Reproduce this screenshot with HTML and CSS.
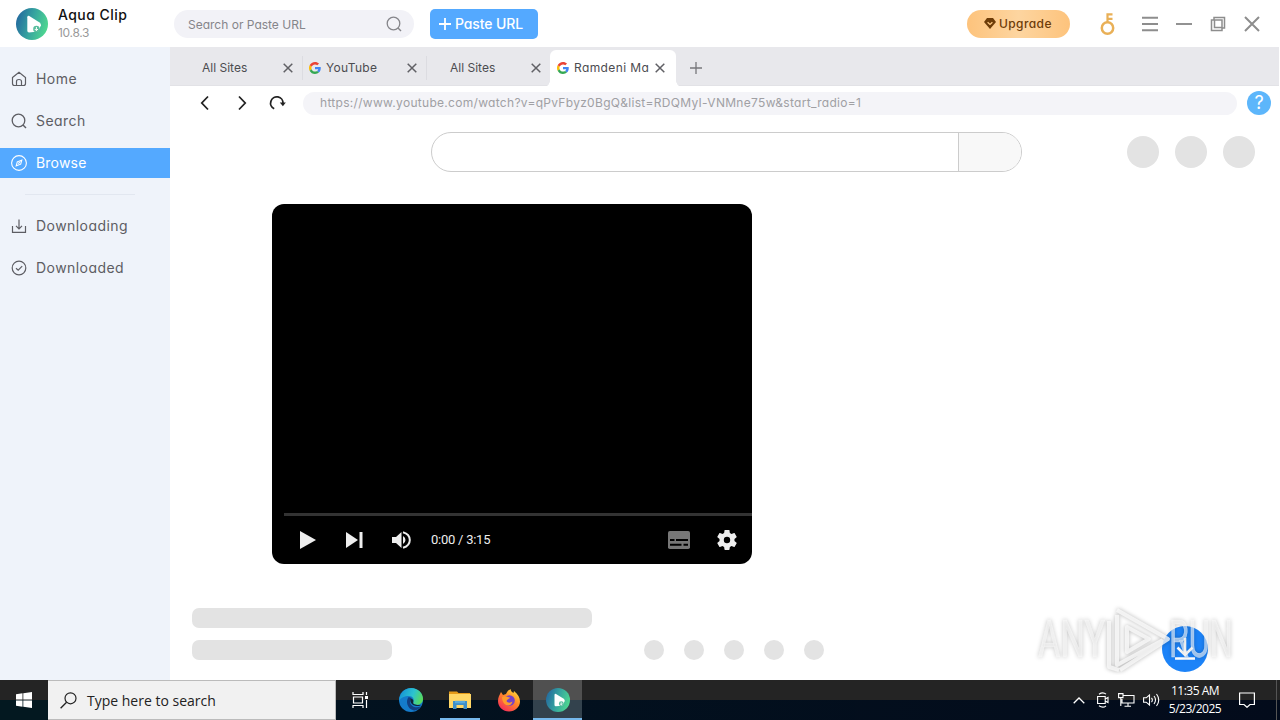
FILE: index.html
```
<!DOCTYPE html>
<html lang="en">
<head>
    <meta charset="UTF-8">
    <meta name="viewport" content="width=device-width, initial-scale=1.0">
    <title>Aqua Clip</title>
    <link rel="stylesheet" href="styles.css">
</head>
<body>
<!-- shared shapes -->
<svg class="defs" width="0" height="0">
    <defs>
        <linearGradient id="aqua" x1="0" y1="0.3" x2="1" y2="0.6">
            <stop offset="0" stop-color="#24699f"/>
            <stop offset="0.5" stop-color="#36a59f"/>
            <stop offset="1" stop-color="#4fd98f"/>
        </linearGradient>
        <linearGradient id="edgeTop" x1="0" y1="0.3" x2="1" y2="0.6">
            <stop offset="0" stop-color="#1593d6"/>
            <stop offset="0.55" stop-color="#2cc3cf"/>
            <stop offset="1" stop-color="#5bdc55"/>
        </linearGradient>
        <linearGradient id="fox" x1="0.9" y1="0" x2="0.2" y2="1">
            <stop offset="0" stop-color="#ffe840"/>
            <stop offset="0.45" stop-color="#ff8a28"/>
            <stop offset="1" stop-color="#f5265c"/>
        </linearGradient>
    </defs>
    <symbol id="logo" viewBox="0 0 32 32">
        <circle cx="16" cy="16" r="16" fill="url(#aqua)"/>
        <path d="M11.300 9.200q.2-2 2-1.200l10.300 6.400q1.400 1 1.400 2.800l-3 6.300-9 .9q-1.600 0-1.700-1.600z" fill="#fff"/>
        <circle cx="20.400" cy="21" r="3.200" fill="#58bd9d"/>
        <path d="M20.400 19v3.600M18.800 21l1.600 1.600L22 21" fill="none" stroke="#fff"/>
    </symbol>
    <symbol id="google" viewBox="0 0 48 48">
        <path fill="#ea4335" d="M24 9.500c3.540 0 6.710 1.220 9.210 3.600l6.850-6.850C35.900 2.380 30.470 0 24 0 14.620 0 6.510 5.380 2.560 13.220l7.980 6.190C12.430 13.720 17.740 9.500 24 9.500z"/>
        <path fill="#4285f4" d="M46.980 24.550c0-1.570-.15-3.090-.38-4.550H24v9.020h12.940c-.58 2.960-2.260 5.480-4.780 7.180l7.730 6c4.510-4.180 7.090-10.360 7.090-17.650z"/>
        <path fill="#fbbc05" d="M10.530 28.590c-.48-1.450-.76-2.990-.76-4.590s.27-3.140.76-4.590l-7.980-6.190C.92 16.460 0 20.120 0 24c0 3.880.92 7.540 2.560 10.780l7.970-6.190z"/>
        <path fill="#34a853" d="M24 48c6.480 0 11.930-2.130 15.890-5.810l-7.730-6c-2.150 1.450-4.920 2.300-8.160 2.300-6.260 0-11.570-4.220-13.470-9.910l-7.980 6.190C6.510 42.620 14.620 48 24 48z"/>
    </symbol>
    <symbol id="close" viewBox="0 0 10 10">
        <path d="M.7.7l8.600 8.600M9.300.7L.7 9.300" fill="none" stroke="#606065" stroke-width="1.500"/>
    </symbol>
    <symbol id="search" viewBox="0 0 16 16">
        <circle cx="7.500" cy="7.500" r="6.300" fill="none" stroke="currentColor" stroke-width="1.300"/>
        <path d="M12 12l3 3" stroke="currentColor" stroke-width="1.400"/>
    </symbol>
</svg>

<!-- TITLE BAR -->
<header class="titlebar">
    <svg class="brand-logo" width="32" height="32"><use href="#logo"/></svg>
    <div class="brand">
        <div class="brand-name">Aqua Clip</div>
        <div class="brand-version">10.8.3</div>
    </div>
    <div class="search-box">
        <span>Search or Paste URL</span>
        <svg width="16" height="16"><use href="#search"/></svg>
    </div>
    <div class="paste">
        <svg width="12" height="12" viewBox="0 0 12 12"><path d="M6 0v12M0 6h12" stroke="#fff" stroke-width="1.800"/></svg>
        <span>Paste URL</span>
    </div>
    <div class="upgrade">
        <svg width="12" height="11" viewBox="0 0 12 11"><path d="M3 0h6l3 4-6 7-6-7z" fill="#6d3c08"/><path d="M3.600 4.200L6 6.400l2.400-2.200" fill="none" stroke="#ffc983" stroke-width="1.300"/></svg>
        <span>Upgrade</span>
    </div>
    <div class="window-tools">
        <svg class="key" width="16" height="24" viewBox="0 0 16 24"><circle cx="7.500" cy="16" r="5.700" fill="none" stroke="#e9b057" stroke-width="2.500"/><path d="M7.500 10.500V1.200M6.400 2.300H12.500M7.500 6.800H12.500" fill="none" stroke="#e9b057" stroke-width="2.200"/></svg>
        <svg class="burger" width="16" height="16" viewBox="0 0 16 16"><path d="M0 1.800h16M0 8h16M0 14.200h16" stroke="#8d8d8d" stroke-width="1.900"/></svg>
        <svg class="mini" width="16" height="16" viewBox="0 0 16 16"><path d="M0 8h16" stroke="#8d8d8d" stroke-width="1.900"/></svg>
        <svg class="restore" width="16" height="16" viewBox="0 0 16 16"><path d="M4 4V1.500h10.500V12H12M1.500 4H12v10.500H1.500zM4.500 4V11.500h7.500" fill="none" stroke="#8d8d8d" stroke-width="1.500"/></svg>
        <svg class="quit" width="16" height="16" viewBox="0 0 16 16"><path d="M1 1l14 14M15 1L1 15" stroke="#8d8d8d" stroke-width="2"/></svg>
    </div>
</header>

<div class="app">
    <!-- SIDEBAR -->
    <nav class="sidebar">
        <a class="nav-item">
            <svg width="16" height="16" viewBox="0 0 16 16"><path d="M1.500 6.500L8 1.200l6.500 5.300v6q0 2-2 2h-9q-2 0-2-2zM5.500 14.500V10.500q0-2 2.500-2t2.500 2v4" fill="none" stroke="currentColor" stroke-width="1.200"/></svg>
            <span>Home</span>
        </a>
        <a class="nav-item">
            <svg width="16" height="16"><use href="#search"/></svg>
            <span>Search</span>
        </a>
        <a class="nav-item active">
            <svg width="16" height="16" viewBox="0 0 16 16"><circle cx="8" cy="8" r="7.400" fill="none" stroke="currentColor" stroke-width="1.100"/><path d="M10.800 5.200L9.700 9.200 5.200 10.800 6.300 6.800zM7.300 8.700l1.500-1.500" fill="none" stroke="currentColor" stroke-width="1.100"/></svg>
            <span>Browse</span>
        </a>
        <hr>
        <a class="nav-item">
            <svg width="16" height="16" viewBox="0 0 16 16"><path d="M1.500 8v6.300h13V8M8 1.500v9M5 7.800l3 3 3-3" fill="none" stroke="currentColor" stroke-width="1.200"/></svg>
            <span>Downloading</span>
        </a>
        <a class="nav-item">
            <svg width="16" height="16" viewBox="0 0 16 16"><circle cx="8" cy="8" r="6.800" fill="none" stroke="currentColor" stroke-width="1.200"/><path d="M5 8.200l2.200 2 4-4" fill="none" stroke="currentColor" stroke-width="1.200"/></svg>
            <span>Downloaded</span>
        </a>
    </nav>

    <main class="browser">
        <!-- TABS -->
        <div class="tabs">
            <div class="tab no-icon"><span>All Sites</span><svg width="10" height="10"><use href="#close"/></svg></div>
            <div class="tab"><svg class="fav" width="12" height="12"><use href="#google"/></svg><span>YouTube</span><svg width="10" height="10"><use href="#close"/></svg></div>
            <div class="tab no-icon"><span>All Sites</span><svg width="10" height="10"><use href="#close"/></svg></div>
            <div class="tab current"><svg class="fav" width="12" height="12"><use href="#google"/></svg><span>Ramdeni Ma</span><svg width="10" height="10"><use href="#close"/></svg></div>
            <svg class="new-tab" width="12" height="12" viewBox="0 0 12 12"><path d="M6 0v12M0 6h12" stroke="#77777b" stroke-width="1.300"/></svg>
        </div>

        <!-- ADDRESS -->
        <div class="address-row">
            <svg width="10" height="16" viewBox="0 0 10 16"><path d="M8 1.500L1.800 8 8 14.500" fill="none" stroke="#222" stroke-width="1.800"/></svg>
            <svg width="10" height="16" viewBox="0 0 10 16"><path d="M2 1.500L8.200 8 2 14.500" fill="none" stroke="#222" stroke-width="1.800"/></svg>
            <svg width="18" height="16" viewBox="0 0 18 16"><path d="M5.200 13.700A6.200 6.200 0 1 1 14 8.500" fill="none" stroke="#222" stroke-width="1.800"/><path d="M10.800 7.500h6l-2.900 3.700z" fill="#222"/></svg>
            <div class="address">https://www.youtube.com/watch?v=qPvFbyz0BgQ&amp;list=RDQMyI-VNMne75w&amp;start_radio=1</div>
            <div class="help">?</div>
        </div>

        <!-- PAGE -->
        <section class="page">
            <div class="page-top">
                <div class="field"><div class="field-button"></div></div>
                <div class="avatars"><i></i><i></i><i></i></div>
            </div>
            <div class="player">
                <div class="progress"></div>
                <div class="controls">
                    <svg width="16" height="18" viewBox="0 0 16 18"><path d="M0 0l16 9-16 9z" fill="#eee"/></svg>
                    <svg width="17" height="16" viewBox="0 0 17 16"><path d="M0 0l12 8-12 8zM13.500 0H16.500v16h-3z" fill="#eee"/></svg>
                    <svg width="19" height="18" viewBox="0 0 19 18"><path d="M0 6v6h4l5.500 5V1L4 6zM11 5v8q2.500-1.300 2.500-4T11 5z" fill="#eee"/><path d="M11 1.200q6.800 2 6.800 7.800T11 16.800" fill="none" stroke="#eee" stroke-width="2"/></svg>
                    <span>0:00 / 3:15</span>
                    <svg class="subs" width="22" height="18" viewBox="0 0 22 18"><rect width="22" height="18" rx="1.800" fill="#777"/><path d="M2 9h4.500M8 9h12M2 13.800h11.500M15.500 13.800H20" stroke="#000" stroke-width="2"/></svg>
                    <svg width="20" height="20" viewBox="2 2 20 20"><path fill="#eee" d="M19.430 12.980c.04-.32.07-.64.07-.98s-.03-.66-.07-.98l2.110-1.650c.19-.15.24-.42.12-.64l-2-3.460c-.12-.22-.39-.3-.61-.22l-2.490 1c-.52-.4-1.080-.73-1.690-.98l-.38-2.650C14.460 2.180 14.250 2 14 2h-4c-.25 0-.46.18-.49.42l-.38 2.650c-.61.25-1.170.59-1.690.98l-2.490-1c-.23-.09-.49 0-.61.22l-2 3.460c-.13.22-.07.49.12.64l2.110 1.650c-.04.32-.07.65-.07.98s.03.66.07.98l-2.110 1.650c-.19.15-.24.42-.12.64l2 3.460c.12.22.39.3.61.22l2.490-1c.52.4 1.080.73 1.690.98l.38 2.650c.03.24.24.42.49.42h4c.25 0 .46-.18.49-.42l.38-2.650c.61-.25 1.170-.59 1.690-.98l2.490 1c.23.09.49 0 .61-.22l2-3.460c.12-.22.07-.49-.12-.64l-2.110-1.650zM12 15.200a3.200 3.200 0 1 1 0-6.400 3.200 3.200 0 0 1 0 6.400z"/></svg>
                </div>
            </div>
            <div class="line title-line"></div>
            <div class="meta">
                <div class="line"></div>
                <div class="dots"><i></i><i></i><i></i><i></i><i></i></div>
            </div>

            <svg class="download" width="46" height="46" viewBox="0 0 46 46"><circle cx="23" cy="23" r="23" fill="#1c83f8"/><path d="M23 12v17M15.500 21.500l7.500 7.500 7.500-7.500M13 32.500h20" fill="none" stroke="#fff" stroke-width="2.600"/></svg>
            <svg class="watermark" width="210" height="72" viewBox="0 0 210 72">
                <g class="stamp">
                    <text transform="translate(8 54) scale(0.66 1)">ANY</text>
                    <text transform="translate(139 54) scale(0.62 1)">RUN</text>
                    <path d="M87 12v50L133 37M79 18V64L89 67M87 7L138 36 90 67M97 24L119 36 97 49z"/>
                </g>
            </svg>
        </section>
    </main>
</div>

<!-- TASKBAR -->
<footer class="taskbar">
    <div class="start">
        <svg width="16" height="16" viewBox="0 0 16 16"><path d="M0 2.200l6.500-.9v6.300H0zM7.300 1.200L16 0v7.600H7.300zM0 8.400h6.500v6.300L0 13.800zM7.300 8.400H16V16l-8.700-1.200z" fill="#fff"/></svg>
    </div>
    <div class="task-search">
        <svg width="17" height="17" viewBox="0 0 17 17"><circle cx="10.500" cy="6.300" r="5.500" fill="none" stroke="#222" stroke-width="1.200"/><path d="M6.600 10.300L.6 16.300" stroke="#222" stroke-width="1.300"/></svg>
        <span>Type here to search</span>
    </div>
    <div class="task task-view">
        <svg width="17" height="16" viewBox="0 0 17 16"><path d="M1 0v2.500h10V0M1 16v-2.500h10V16M1.500 5h9v6h-9zM14.500 0v3M14.500 8v8" fill="none" stroke="#fff" stroke-width="1.200"/><path d="M13 4h3v3h-3z" fill="#fff"/></svg>
    </div>
    <div class="task">
        <svg width="24" height="24" viewBox="0 0 24 24"><circle cx="12" cy="12" r="12" fill="#147bcb"/><path d="M.4 10C2 3.500 7 0 12.200 0 19 0 24 5.200 24 10.800c0 4-3 6-6.500 6-3 0-4-1.200-3.300-2.500 1.500-3-.4-6.300-4.200-6.300C5.500 8 1.500 9.500.4 13z" fill="url(#edgeTop)"/><path d="M9.700 9C6.500 12 7.500 21 15 22.500c3 .2 5.500-2 7-4.200-5 2.300-10.500.2-11-4.300-.2-2 .6-3.300 1.500-4z" fill="#123f82"/><path d="M11.500 10.500c-1 3.500 1.500 7.500 6.500 7.500 2 0 3.300-.5 4.500-1.300-4 .5-9 .3-8.200-2.700.6-2-1-3.500-2.800-3.500z" fill="#102238"/></svg>
    </div>
    <div class="task open">
        <svg width="22" height="20" viewBox="0 0 22 20"><path d="M0 1.500h8l1.500 1.500H21v5H0z" fill="#e59b19"/><path d="M0 4h22v14H0z" fill="#ffd766"/><path d="M4 11h14v8h-3.500v-4h-7v4H4z" fill="#3d8fc9"/><path d="M6 10.800h10v2.400H6z" fill="#58aadd"/></svg>
    </div>
    <div class="task">
        <svg width="24" height="24" viewBox="0 0 24 24"><path d="M4 4l2 3 3-1c1-2.500 3-4 4.500-5 .2 2 1.500 3 3 4l.5-2c4 3 6 7 6 10.500C23 19 18 23.500 12 23.500S1 19 1 13c0-3.500 1.500-6 3-9z" fill="url(#fox)"/><circle cx="12.500" cy="12.500" r="5.300" fill="#7542c8"/><path d="M5 9c3-2 5 0 8 .5-1 2-3 1.500-3.500 3.500 1 2 4 2.200 6 .5-.7 3.700-4 4.700-6.500 3.500C6 15.500 5 12 5 9z" fill="#ff9b2b"/></svg>
    </div>
    <div class="task focused">
        <svg width="24" height="24"><use href="#logo"/></svg>
    </div>
    <div class="tray">
        <svg class="more" width="12" height="7" viewBox="0 0 12 7"><path d="M.7 6.200L6 1l5.300 5.200" fill="none" stroke="#fff" stroke-width="1.300"/></svg>
        <svg class="camera" width="12" height="16" viewBox="0 0 12 16"><path d="M.6 4.500h7.600v7H.6zM8.200 7l2.800-1.500v5L8.200 9M2 2.200Q6-.5 9 2.200M2 13.800q4 2.700 7 0" fill="none" stroke="#fff" stroke-width="1.100"/></svg>
        <svg width="17" height="14" viewBox="0 0 17 14"><path d="M5.500 2.500H16v7.500H4V6M10 10v3M6.500 13.200H13M.6.600h4.400v4H.6zM2.800 4.600V13" fill="none" stroke="#fff" stroke-width="1.100"/></svg>
        <svg width="17" height="14" viewBox="0 0 17 14"><path d="M.6 4.800v4.400h2.600L6.500 12V2L3.200 4.800zM8.500 4.800q1.700 2.200 0 4.400M11 3q3 4 0 8M13.500 1q4.500 6 0 12" fill="none" stroke="#fff" stroke-width="1.100"/></svg>
        <div class="clock"><span>11:35 AM</span><span>5/23/2025</span></div>
        <svg width="16" height="16" viewBox="0 0 16 16"><path d="M.6 1h14.800v11.500H11L8 15.300 5 12.500H.6z" fill="none" stroke="#fff" stroke-width="1.200"/></svg>
    </div>
</footer>
</body>
</html>
```
FILE: styles.css
```
* {
    box-sizing: border-box;
}

body {
    margin: 0;
    width: 1280px;
    height: 720px;
    overflow: hidden;
    display: flex;
    flex-direction: column;
    background-color: #fff;
    font-family: Inter, "Open Sans", sans-serif;
    font-feature-settings: "cv11";
}

svg {
    display: block;
    flex: none;
}

.defs {
    position: absolute;
}

/* TITLE BAR */
.titlebar {
    height: 47px;
    flex: none;
    display: flex;
    align-items: center;
    padding: 0 20px 0 16px;
}

.brand {
    width: 116px;
    margin-left: 10px;
}

.brand-name {
    font-size: 14px;
    font-weight: 500;
    line-height: 18px;
    letter-spacing: 0.45px;
    color: #111;
}

.brand-version {
    font-size: 12px;
    line-height: 17px;
    letter-spacing: -0.3px;
    color: #999;
}

.search-box {
    width: 240px;
    height: 28px;
    border-radius: 14px;
    background-color: #f2f2f7;
    color: #85858a;
    font-size: 12px;
    display: flex;
    align-items: center;
    justify-content: space-between;
    padding: 0 12px 0 14px;
}

.search-box span {
    padding-top: 2px;
}

.paste {
    width: 108px;
    height: 30px;
    margin-left: 16px;
    border-radius: 5px;
    background-color: #54a9ff;
    color: #fff;
    font-size: 14px;
    font-weight: 500;
    letter-spacing: -0.1px;
    display: flex;
    align-items: center;
    gap: 4px;
    padding-left: 9px;
}

.upgrade {
    width: 103px;
    height: 28px;
    margin-left: auto;
    border-radius: 14px;
    background: linear-gradient(90deg, #fdc37c, #fdd5a0 50%, #fdc37c);
    color: #6d3c08;
    font-size: 12px;
    font-weight: 500;
    letter-spacing: 0.4px;
    display: flex;
    align-items: center;
    gap: 3px;
    padding-left: 17px;
}

.window-tools {
    display: flex;
    align-items: center;
    gap: 18px;
    margin-left: 30px;
}

.window-tools .burger {
    margin-left: 8px;
}

/* SIDEBAR */
.app {
    height: 633px;
    display: flex;
}

.sidebar {
    width: 170px;
    padding-top: 17px;
    background-color: #eff3fa;
}

.nav-item {
    height: 30px;
    margin-bottom: 12px;
    padding-left: 11px;
    display: flex;
    align-items: center;
    gap: 9px;
    color: #5d5d63;
    font-size: 14px;
    letter-spacing: 0.45px;
}

.nav-item span {
    padding-bottom: 1px;
}

.nav-item.active {
    background-color: #54a9ff;
    color: #fff;
    letter-spacing: 0.2px;
}

.sidebar hr {
    width: 110px;
    height: 1px;
    margin: 16px 0 16px 25px;
    border: 0;
    background-color: #e2e7f0;
}

/* TABS */
.browser {
    flex: 1;
    min-width: 0;
}

.tabs {
    height: 39px;
    margin-right: 1px;
    padding: 3px 0 0 8px;
    background-color: #e8e8ec;
    border-bottom: 1px solid #e2e2e6;
    display: flex;
    align-items: center;
}

.tab {
    width: 124px;
    height: 36px;
    padding: 0 9px 0 7px;
    display: flex;
    align-items: center;
    font-size: 12px;
    letter-spacing: 0.3px;
    color: #4c4c50;
    position: relative;
}

.tab.no-icon {
    padding-left: 24px;
    letter-spacing: 0;
}

.tab .fav {
    margin-right: 5px;
}

.tab span {
    flex: 1;
    white-space: nowrap;
}

.tab:nth-child(2)::before,
.tab:nth-child(3)::before {
    content: "";
    width: 1px;
    height: 24px;
    position: absolute;
    left: 0;
    background-color: #dcdce1;
}

.tab.current {
    width: 126px;
    padding-right: 11px;
    background-color: #fff;
    border-radius: 6px 6px 0 0;
    letter-spacing: 0.4px;
}

/* flared feet of the open tab */
.tab.current::before,
.tab.current::after {
    content: "";
    width: 6px;
    height: 6px;
    position: absolute;
    bottom: -1px;
    left: -6px;
    background: radial-gradient(circle at 0 0, transparent 5.5px, #fff 6px);
}

.tab.current::after {
    left: auto;
    right: -6px;
    transform: scaleX(-1);
}

.new-tab {
    margin-left: 14px;
}

/* ADDRESS */
.address-row {
    height: 34px;
    padding: 0 9px 0 30px;
    display: flex;
    align-items: center;
}

.address-row svg:nth-of-type(2) {
    margin-left: 27px;
}

.address-row svg:nth-of-type(3) {
    margin-left: 22px;
}

.address {
    width: 934px;
    height: 23px;
    margin-left: 16px;
    padding-left: 17px;
    border-radius: 12px;
    background-color: #f4f4f8;
    color: #a0a0a4;
    font-size: 12px;
    letter-spacing: 0.3px;
    line-height: 22px;
}

.help {
    width: 24px;
    height: 24px;
    margin-left: auto;
    border-radius: 50%;
    background-color: #5db6fb;
    color: #fff;
    font-size: 18px;
    line-height: 24px;
    text-align: center;
}

/* PAGE */
.page {
    height: 560px;
    padding: 12px 25px 20px 22px;
    position: relative;
}

.page i {
    display: block;
    border-radius: 50%;
    background-color: #e3e3e3;
}

.page-top {
    display: flex;
    align-items: center;
    justify-content: space-between;
    margin-left: 239px;
}

.field {
    width: 591px;
    height: 40px;
    border: 1px solid #ccc;
    border-radius: 20px;
    overflow: hidden;
    display: flex;
    justify-content: flex-end;
}

.field-button {
    width: 63px;
    border-left: 1px solid #ccc;
    background-color: #f8f8f8;
}

.avatars,
.dots {
    display: flex;
    gap: 16px;
}

.avatars i {
    width: 32px;
    height: 32px;
}

.player {
    width: 480px;
    height: 360px;
    margin: 32px 0 44px 80px;
    border-radius: 12px;
    background-color: #000;
    overflow: hidden;
    display: flex;
    flex-direction: column;
    justify-content: flex-end;
}

.progress {
    height: 3px;
    margin-left: 12px;
    background-color: #333;
}

.controls {
    height: 48px;
    padding: 0 15px 0 28px;
    display: flex;
    align-items: center;
    color: #eee;
    font-family: Roboto, sans-serif;
    font-size: 13px;
    letter-spacing: -0.25px;
}

.controls svg:nth-of-type(2) {
    margin-left: 30px;
}

.controls svg:nth-of-type(3) {
    margin-left: 29px;
}

.controls span {
    margin-left: 20px;
    padding-bottom: 2px;
}

.controls .subs {
    margin: 0 27px 0 auto;
}

.line {
    width: 200px;
    height: 20px;
    border-radius: 7px;
    background-color: #e3e3e3;
}

.title-line {
    width: 400px;
}

.meta {
    margin-top: 12px;
    display: flex;
    gap: 252px;
}

.dots {
    gap: 20px;
}

.dots i {
    width: 20px;
    height: 20px;
}

.download {
    position: absolute;
    right: 72px;
    bottom: 8px;
}

.watermark {
    position: absolute;
    right: 40px;
    bottom: 5px;
}

.stamp {
    fill: rgba(250, 250, 250, 0.6);
    stroke: rgba(250, 250, 250, 0.6);
    stroke-width: 0.5px;
    filter: drop-shadow(0 0 2px rgba(0, 0, 0, 0.35));
    font-family: Roboto, sans-serif;
    font-size: 52px;
}

.stamp path {
    fill: none;
    stroke: rgba(250, 250, 250, 0.8);
    stroke-width: 4px;
    stroke-linejoin: round;
}

/* TASKBAR */
.taskbar {
    height: 40px;
    flex: none;
    display: flex;
    background: linear-gradient(90deg, rgba(0, 30, 38, 0.5), transparent) 0 20px no-repeat,
        linear-gradient(#242424 0 49%, #030b1b 51%);
    color: #fff;
    font-family: "Open Sans", sans-serif;
    font-feature-settings: normal;
}

.start,
.task {
    width: 48px;
    display: flex;
    align-items: center;
    justify-content: center;
}

.start {
    background: linear-gradient(#242424 0 49%, #031820 51%);
}

.task {
    width: 49px;
}

.task-view {
    width: 48px;
    margin-right: 2px;
}

.task-search {
    width: 288px;
    padding-left: 12px;
    border: 1px solid #bbb;
    border-left: 0;
    background-color: #f1f1f1;
    color: #222;
    font-size: 14px;
    display: flex;
    align-items: center;
    gap: 10px;
}

.task.open {
    background: linear-gradient(#76b9ed, #76b9ed) center bottom / 40px 2px no-repeat;
}

.task.focused {
    background: linear-gradient(#505050 0 49%, #33424d 51%);
    box-shadow: inset 0 -2px #76b9ed;
}

.tray {
    margin-left: auto;
    margin-right: 3px;
    padding-right: 21px;
    border-right: 1px solid #555;
    display: flex;
    align-items: center;
    gap: 8px;
}

.tray .more {
    margin-right: 4px;
}

.tray .camera {
    margin-right: 1px;
}

.clock {
    width: 56px;
    margin: 0 8px 0 -1px;
    display: flex;
    flex-direction: column;
    align-items: center;
    font-size: 12px;
    line-height: 18px;
    letter-spacing: -0.5px;
    white-space: nowrap;
}
```
